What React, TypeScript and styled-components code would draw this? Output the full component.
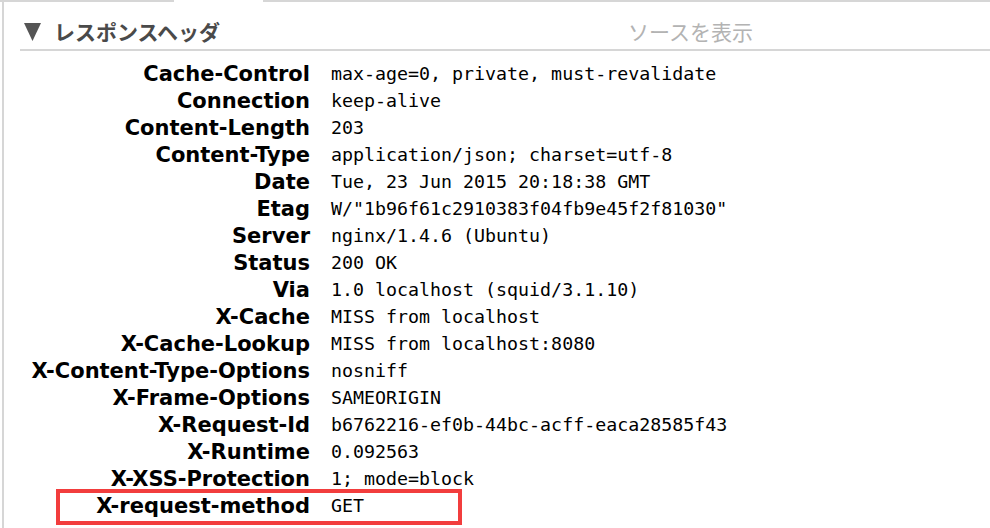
import React from "react";
import styled, { createGlobalStyle } from "styled-components";

const GlobalStyle = createGlobalStyle`
  html, body {
    margin: 0;
    padding: 0;
    background: #ffffff;
  }
`;

interface Header {
  name: string;
  value: string;
  marked?: boolean;
}

const headers: Header[] = [
  { name: "Cache-Control", value: "max-age=0, private, must-revalidate" },
  { name: "Connection", value: "keep-alive" },
  { name: "Content-Length", value: "203" },
  { name: "Content-Type", value: "application/json; charset=utf-8" },
  { name: "Date", value: "Tue, 23 Jun 2015 20:18:38 GMT" },
  { name: "Etag", value: 'W/"1b96f61c2910383f04fb9e45f2f81030"' },
  { name: "Server", value: "nginx/1.4.6 (Ubuntu)" },
  { name: "Status", value: "200 OK" },
  { name: "Via", value: "1.0 localhost (squid/3.1.10)" },
  { name: "X-Cache", value: "MISS from localhost" },
  { name: "X-Cache-Lookup", value: "MISS from localhost:8080" },
  { name: "X-Content-Type-Options", value: "nosniff" },
  { name: "X-Frame-Options", value: "SAMEORIGIN" },
  { name: "X-Request-Id", value: "b6762216-ef0b-44bc-acff-eaca28585f43" },
  { name: "X-Runtime", value: "0.092563" },
  { name: "X-XSS-Protection", value: "1; mode=block" },
  { name: "X-request-method", value: "GET", marked: true },
];

const Page = styled.div`
  width: 990px;
  height: 528px;
  overflow: hidden;
`;

const TopRule = styled.div`
  display: flex;
  height: 2px;
`;

const RuleSegment = styled.div<{ $width?: number }>`
  background: #d6d6d6;
  ${({ $width }) => ($width ? `width: ${$width}px;` : "flex: 1;")}
`;

const RuleGap = styled.div`
  width: 89px;
`;

const Panel = styled.section`
  margin-left: 2px;
  border-left: 2px solid #d6d6d6;
  height: 526px;
`;

const SectionHeader = styled.div`
  margin-left: 16px;
  height: 35px;
  padding-top: 12px;
  border-bottom: 2px solid #d6d6d6;
  display: flex;
  align-items: center;
  font-family: "Noto Sans CJK JP", "Noto Sans", sans-serif;
  font-size: 21px;
  line-height: 1;
`;

const Title = styled.h3`
  margin: 0;
  width: 604px;
  display: flex;
  align-items: center;
  gap: 13px;
  padding-left: 4px;
  font-size: 21px;
  font-weight: 700;
  color: #4a4a4a;

  svg {
    flex-shrink: 0;
  }
`;

const SourceLink = styled.span`
  color: #b3b3b3;
  font-weight: 400;
`;

const List = styled.div`
  padding-top: 9px;
`;

const Row = styled.div<{ $marked?: boolean }>`
  position: relative;
  display: flex;
  align-items: center;
  height: 27px;

  ${({ $marked }) =>
    $marked &&
    `
    &::before {
      content: "";
      position: absolute;
      left: 52px;
      top: -3px;
      width: 398px;
      height: 28px;
      border: 4px solid #f23d3d;
    }
  `}
`;

const Key = styled.span`
  width: 306px;
  text-align: right;
  font-family: "DejaVu Sans", "Liberation Sans", sans-serif;
  font-weight: 700;
  font-size: 21px;
  color: #000;
  white-space: nowrap;
`;

const Value = styled.span`
  margin-left: 21px;
  font-family: "DejaVu Sans Mono", "Liberation Mono", monospace;
  font-size: 18.3px;
  color: #000;
  white-space: nowrap;
`;

const Arrow = () => (
  <svg width="17" height="18" viewBox="0 0 17 18">
    <polygon points="0,0 17,0 8.5,18" fill="#555555" />
  </svg>
);

export default function App() {
  return (
    <Page>
      <GlobalStyle />
      <TopRule>
        <RuleSegment $width={174} />
        <RuleGap />
        <RuleSegment />
      </TopRule>
      <Panel>
        <SectionHeader>
          <Title>
            <Arrow />
            レスポンスヘッダ
          </Title>
          <SourceLink>ソースを表示</SourceLink>
        </SectionHeader>
        <List>
          {headers.map((h) => (
            <Row key={h.name} $marked={h.marked}>
              <Key>{h.name}</Key>
              <Value>{h.value}</Value>
            </Row>
          ))}
        </List>
      </Panel>
    </Page>
  );
}
